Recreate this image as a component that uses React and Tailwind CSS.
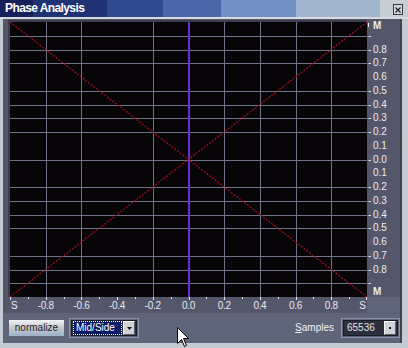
import React from "react";

const W = 357;
const H = 275;
const ROW = H / 20;
const COL = W / 10;
const hLines = [1, 2, 3, 5, 6, 7, 8, 10, 12, 13, 14, 15, 17, 18, 19];
const vLines = [1, 2, 4, 6, 7, 8, 9];

function TitleBar() {
  return (
    <div className="h-[17px] flex shrink-0">
      <div className="w-[33px] bg-[#16215c] relative">
        <span className="absolute left-[5px] top-[1px] text-[12px] leading-[14px] font-bold tracking-[-0.6px] text-white whitespace-nowrap">
          Phase Analysis
        </span>
      </div>
      <div className="w-[74px] bg-[#1f3274]" />
      <div className="w-[56px] bg-[#2f4a8e]" />
      <div className="w-[58px] bg-[#4a67a7]" />
      <div className="w-[75px] bg-[#7190c3]" />
      <div className="w-[84px] bg-[#a1b5cc]" />
      <div className="flex-1 bg-[#c6ced6] flex items-start justify-end pr-[5px] pt-[4px]">
        <div className="w-[10px] h-[11px] bg-[#d2d6da] border border-[#3a3a44] flex items-center justify-center">
          <svg width="6" height="6" viewBox="0 0 6 6">
            <path d="M0.5 0.5 L5.5 5.5 M5.5 0.5 L0.5 5.5" stroke="#202028" strokeWidth="1.2" />
          </svg>
        </div>
      </div>
    </div>
  );
}

function Plot() {
  return (
    <svg width={W} height={H} className="block bg-[#080509]">
      <g shapeRendering="crispEdges">
        {hLines.map((k) => {
          const y = Math.round(k * ROW) + 0.5;
          return <line key={"h" + k} x1={0} x2={W} y1={y} y2={y} stroke="#6e7286" />;
        })}
        {vLines.map((k) => {
          const x = Math.round(k * COL) + 0.5;
          return <line key={"v" + k} x1={x} x2={x} y1={0} y2={H} stroke="#6e7286" />;
        })}
        <line x1={179} x2={179} y1={0} y2={H} stroke="#6f2ad4" strokeWidth={2} />
      </g>
      <line x1={0} y1={0} x2={W} y2={H} stroke="#a80e1c" strokeWidth={1.2} strokeDasharray="2 1.4" />
      <line x1={0} y1={H} x2={W} y2={0} stroke="#a80e1c" strokeWidth={1.2} strokeDasharray="2 1.4" />
    </svg>
  );
}

function XAxis() {
  const labels = ["S", "-0.8", "-0.6", "-0.4", "-0.2", "0.0", "0.2", "0.4", "0.6", "0.8", "S"];
  return (
    <div className="relative h-[16px] w-[357px]">
      <svg width={W} height={4} className="absolute left-0 top-0" shapeRendering="crispEdges">
        {Array.from({ length: 21 }).map((_, j) => {
          const x = Math.min(Math.round(j * COL / 2), W - 1) + 0.5;
          return <line key={j} x1={x} x2={x} y1={0} y2={j % 2 ? 2 : 3} stroke="#e4e4ec" />;
        })}
      </svg>
      {labels.map((l, k) => {
        const cx = k * COL;
        if (k === 0)
          return (
            <span key={k} className="absolute top-[4px] left-[1px] text-[10px] leading-[10px] text-[#e8e8f0]">
              {l}
            </span>
          );
        if (k === 10)
          return (
            <span key={k} className="absolute top-[4px] right-[1px] text-[10px] leading-[10px] text-[#e8e8f0]">
              {l}
            </span>
          );
        return (
          <span
            key={k}
            className="absolute top-[4px] -translate-x-1/2 text-[10px] leading-[10px] tracking-[-0.3px] text-[#e8e8f0]"
            style={{ left: cx }}
          >
            {l}
          </span>
        );
      })}
    </div>
  );
}

function YAxis() {
  const vals = ["M", "", "0.8", "0.7", "0.6", "0.5", "0.4", "0.3", "0.2", "0.1", "0.0", "0.1", "0.2", "0.3", "0.4", "0.5", "0.6", "0.7", "0.8", "", "M"];
  return (
    <div className="relative w-[33px] h-[278px] bg-[#54576a]">
      {vals.map((v, k) => {
        let top = 3 + k * ROW - 5;
        if (k === 0) top = 2;
        if (k === 20) top = 268;
        const dash = hLines.includes(k);
        return (
          <div
            key={k}
            className="absolute left-[1px] flex items-center text-[10px] leading-[10px] text-[#ececf2]"
            style={{ top }}
          >
            <span className="w-[5px] text-left">
              {k === 0 ? (
                <span className="block w-[1px] h-[4px] bg-[#ececf2] -mt-[3px]" />
              ) : dash ? (
                "-"
              ) : (
                ""
              )}
            </span>
            <span className={k === 0 || k === 20 ? "font-bold" : ""}>{v}</span>
          </div>
        );
      })}
    </div>
  );
}

function Combo({ children, focus, wide }) {
  return (
    <div className={`${wide} h-[20px] border border-[#8a93a7] p-px`}>
      <div className="h-full flex items-center bg-[#2c303c] border border-[#1a1d28] pr-px">
        {children}
        <div className="w-[12px] h-[14px] bg-[#cfd3d8] border-t border-l border-[#f4f6f8] border-r border-b border-r-[#5a5e68] border-b-[#5a5e68] flex items-center justify-center">
          {focus ? (
            <svg width="5" height="3" viewBox="0 0 5 3">
              <path d="M0 0 H5 L2.5 3 Z" fill="#101018" />
            </svg>
          ) : (
            <div className="w-[2px] h-[2px] bg-[#101018]" />
          )}
        </div>
      </div>
    </div>
  );
}

export default function App() {
  return (
    <div className="w-[408px] h-[348px] bg-[#c3cbd3] flex flex-col relative overflow-hidden font-['Liberation_Sans',Arial,sans-serif]">
      <TitleBar />
      <div className="h-[2px] bg-[#d4dae0] shrink-0" />
      <div className="flex-1 ml-[3px] mr-[6px] mb-[5px] flex flex-col bg-[#5f6579] border-r-2 border-[#3f4350]">
        <div className="flex h-[294px]">
          <div className="w-[364px] bg-[#54576a] flex flex-col pl-[5px] pt-[1px]">
            <div className="border-l-2 border-t-2 border-[#3d404c] w-[359px]">
              <Plot />
            </div>
            <div className="pl-[2px]">
              <XAxis />
            </div>
          </div>
          <YAxis />
        </div>
        <div className="flex-1 flex items-center pl-[6px]">
          <button className="w-[55px] h-[16px] bg-gradient-to-b from-[#f2f4f6] via-[#c3c7cc] to-[#9db3c9] text-[10px] leading-[10px] text-[#1c1c2a] flex items-center justify-center">
            normalize
          </button>
          <div className="ml-[5px]">
            <Combo focus wide="w-[70px]">
              <div className="flex-1 h-[14px] mx-px bg-[#0c1b66] border border-dotted border-white flex items-center pl-[2px] text-[10px] leading-[10px] text-white">
                Mid/Side
              </div>
            </Combo>
          </div>
          <div className="flex-1" />
          <span className="text-[10px] leading-[10px] text-[#eef0f4] mr-[7px]">
            <span className="underline">S</span>amples
          </span>
          <Combo wide="w-[59px]">
            <div className="flex-1 pl-[3px] text-[10px] leading-[10px] text-[#e4e4ec]">65536</div>
          </Combo>
        </div>
      </div>
      <svg className="absolute left-[177px] top-[327px]" width="13" height="21" viewBox="0 0 13 21">
        <path d="M0.5 0.5 L0.5 16.5 L4.5 12.5 L7.5 19.5 L9.5 18.5 L6.5 11.5 L11.5 11.5 Z" fill="#ffffff" stroke="#000000" strokeWidth="1" />
      </svg>
    </div>
  );
}
